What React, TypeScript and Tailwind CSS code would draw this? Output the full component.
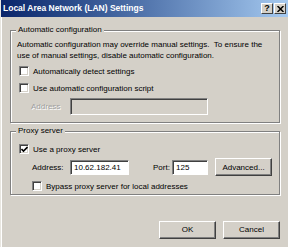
import React from "react";

const font = { fontFamily: '"Liberation Sans", Arial, sans-serif' };

function Check({ checked }: { checked?: boolean }) {
  return (
    <div className="w-[10px] h-[10px] bg-white border-t border-l border-t-[#808080] border-l-[#808080] border-b border-r border-b-white border-r-white shadow-[inset_1px_1px_0_#404040,inset_-1px_-1px_0_#d4d0c8] flex items-center justify-center shrink-0">
      {checked && (
        <svg width="7" height="7" viewBox="0 0 7 7">
          <path d="M0.5 3 L2.5 5 L6.5 1" stroke="#000" strokeWidth="1.6" fill="none" />
        </svg>
      )}
    </div>
  );
}

function Button({ children, w }: { children: React.ReactNode; w: string }) {
  return (
    <div
      className={`${w} h-[18px] flex items-center justify-center border-t border-l border-t-white border-l-white border-b border-r border-b-[#404040] border-r-[#404040] shadow-[inset_-1px_-1px_0_#808080] text-[8px] text-black`}
    >
      {children}
    </div>
  );
}

function Group({ title, h, children }: { title: string; h: string; children: React.ReactNode }) {
  return (
    <div className={`relative ${h} border border-[#808080] shadow-[inset_1px_1px_0_#fff,1px_1px_0_#fff]`}>
      <div className="absolute left-[5px] top-[-7px] bg-[#d4d0c8] px-[2px] text-[8px] leading-[12px]">
        {title}
      </div>
      {children}
    </div>
  );
}

export default function App() {
  return (
    <div
      className="w-[288px] h-[247px] bg-[#d4d0c8] overflow-hidden text-black border-l border-l-[#e8e6e0] shadow-[inset_1px_0_0_#fff]"
      style={font}
    >
      <div className="h-[17px] bg-gradient-to-r from-[#0a246a] to-[#a6caf0] flex items-center pl-[2px] pr-[2px]">
        <span className="text-white font-bold text-[8.5px] flex-1 leading-none">
          Local Area Network (LAN) Settings
        </span>
        <div className="flex">
          <div className="w-[12px] h-[11px] bg-[#d4d0c8] border-t border-l border-t-white border-l-white border-b border-r border-b-[#404040] border-r-[#404040] flex items-center justify-center text-[9px] font-bold leading-none">
            ?
          </div>
          <div className="w-[12px] h-[11px] ml-[1px] bg-[#d4d0c8] border-t border-l border-t-white border-l-white border-b border-r border-b-[#404040] border-r-[#404040] flex items-center justify-center">
            <svg width="7" height="6" viewBox="0 0 7 6">
              <path d="M0.5 0 L6.5 6 M6.5 0 L0.5 6" stroke="#000" strokeWidth="1.5" />
            </svg>
          </div>
        </div>
      </div>

      <div className="pl-[9px] pr-[8px] pt-[13px]">
        <Group title="Automatic configuration" h="h-[93px]">
          <div className="pl-[6px] pt-[8px] text-[8px] leading-[11px]">
            <div>Automatic configuration may override manual settings.&nbsp; To ensure the</div>
            <div>use of manual settings, disable automatic configuration.</div>
            <div className="flex items-center mt-[5px] ml-[2px] h-[10px]">
              <Check />
              <span className="ml-[4px]">Automatically detect settings</span>
            </div>
            <div className="flex items-center mt-[7px] ml-[2px] h-[10px]">
              <Check />
              <span className="ml-[4px]">Use automatic configuration script</span>
            </div>
            <div className="flex items-center mt-[5px] ml-[14px]">
              <span className="w-[39px] text-[#a0a0a0]" style={{ textShadow: "1px 1px 0 #fff" }}>
                Address
              </span>
              <div className="w-[138px] h-[17px] bg-[#d4d0c8] border-t border-l border-t-[#808080] border-l-[#808080] border-b border-r border-b-white border-r-white shadow-[inset_1px_1px_0_#404040]" />
            </div>
          </div>
        </Group>

        <div className="mt-[8px]">
          <Group title="Proxy server" h="h-[64px]">
            <div className="pl-[6px] pt-[12px] text-[8px] leading-[11px]">
              <div className="flex items-center ml-[2px] h-[10px]">
                <Check checked />
                <span className="ml-[4px]">Use a proxy server</span>
              </div>
              <div className="flex items-center mt-[4px] ml-[15px] h-[18px]">
                <span className="w-[38px]">Address:</span>
                <div className="w-[59px] h-[15px] bg-white border-t border-l border-t-[#808080] border-l-[#808080] border-b border-r border-b-white border-r-white shadow-[inset_1px_1px_0_#404040] flex items-center pl-[3px]">
                  10.62.182.41
                </div>
                <span className="ml-[24px] w-[19px]">Port:</span>
                <div className="w-[36px] h-[15px] bg-white border-t border-l border-t-[#808080] border-l-[#808080] border-b border-r border-b-white border-r-white shadow-[inset_1px_1px_0_#404040] flex items-center pl-[3px]">
                  125
                </div>
                <div className="ml-[7px]">
                  <Button w="w-[57px]">Advanced...</Button>
                </div>
              </div>
              <div className="flex items-center mt-[5px] ml-[15px] h-[10px]">
                <Check />
                <span className="ml-[4px]">Bypass proxy server for local addresses</span>
              </div>
            </div>
          </Group>
        </div>

        <div className="flex justify-end mt-[26px] gap-[7px]">
          <Button w="w-[57px]">OK</Button>
          <Button w="w-[57px]">Cancel</Button>
        </div>
      </div>
    </div>
  );
}
